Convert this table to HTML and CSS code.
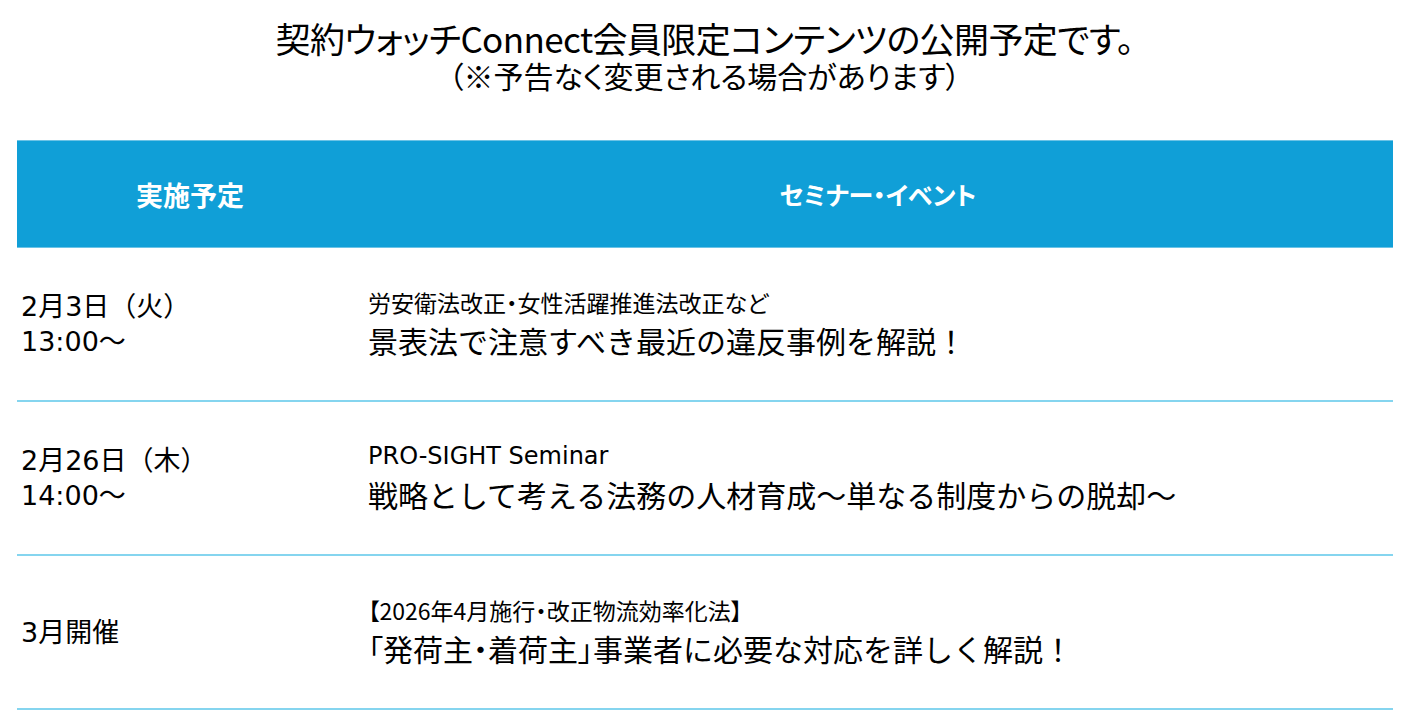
FILE: index.html
```html
<!DOCTYPE html>
<html lang="ja">
<head>
<meta charset="utf-8">
<link rel="stylesheet" href="styles.css">
</head>
<body>
<div class="page">
  <header class="intro">
    <p class="intro-main">契約ウォッチConnect会員限定コンテンツの公開予定です。</p>
    <p class="intro-note">（※予告なく変更される場合があります）</p>
  </header>
  <section class="schedule">
    <div class="head">
      <div class="col-date">実施予定</div>
      <div class="col-event">セミナー・イベント</div>
    </div>
    <div class="row">
      <div class="col-date"><p>2月3日（火）</p><p>13:00～</p></div>
      <div class="col-event"><p class="sub">労安衛法改正・女性活躍推進法改正など</p><p class="main">景表法で注意すべき最近の違反事例を解説！</p></div>
    </div>
    <div class="row">
      <div class="col-date"><p>2月26日（木）</p><p>14:00～</p></div>
      <div class="col-event"><p class="sub latin">PRO-SIGHT Seminar</p><p class="main">戦略として考える法務の人材育成～単なる制度からの脱却～</p></div>
    </div>
    <div class="row">
      <div class="col-date"><p>3月開催</p></div>
      <div class="col-event"><p class="sub">【2026年4月施行・改正物流効率化法】</p><p class="main"><span class="punct">「</span>発荷主<span class="punct">・</span>着荷主<span class="punct">」</span>事業者に必要な対応を詳しく解説！</p></div>
    </div>
  </section>
</div>
</body>
</html>
```
FILE: styles.css
```css
html, body {
  margin: 0;
  padding: 0;
  background: #ffffff;
}
p { margin: 0; }
.page {
  width: 1409px;
  font-family: "Noto Sans CJK JP", sans-serif;
  color: #000;
}
.intro {
  padding-top: 18px;
  text-align: center;
  font-feature-settings: "palt";
}
.intro-main {
  font-size: 35px;
  line-height: 40px;
  letter-spacing: -0.6px;
}
.intro-note {
  font-size: 30px;
  line-height: 34px;
}
.schedule {
  margin: 48px 16px 0 17px;
}
.head {
  display: flex;
  height: 106px;
  background: #109fd7;
  border-top: 1px solid #6cc3e6;
  border-bottom: 1px solid #6cc3e6;
  color: #fff;
  font-weight: 700;
  font-size: 27px;
  align-items: center;
  font-feature-settings: "palt";
}
.head .col-date, .head .col-event {
  text-align: center;
}
.head .col-event {
  font-size: 25px;
}
.col-date {
  width: 346px;
  flex: none;
}
.col-event {
  flex: 1;
}
.row {
  display: flex;
  align-items: center;
  height: 152px;
  border-bottom: 2px solid #85d5ef;
}
.row .col-date {
  padding-left: 4px;
  box-sizing: border-box;
  font-family: "DejaVu Sans", "Noto Sans CJK JP", sans-serif;
  font-size: 27px;
  line-height: 35px;
}
.row .col-event {
  padding-left: 5px;
}
.sub {
  font-size: 23px;
  line-height: 32px;
  font-feature-settings: "palt";
}
.sub.latin {
  font-family: "DejaVu Sans", "Noto Sans CJK JP", sans-serif;
  font-size: 24px;
}
.main {
  font-size: 30px;
  line-height: 44px;
}
.punct {
  font-feature-settings: "palt";
}
```
